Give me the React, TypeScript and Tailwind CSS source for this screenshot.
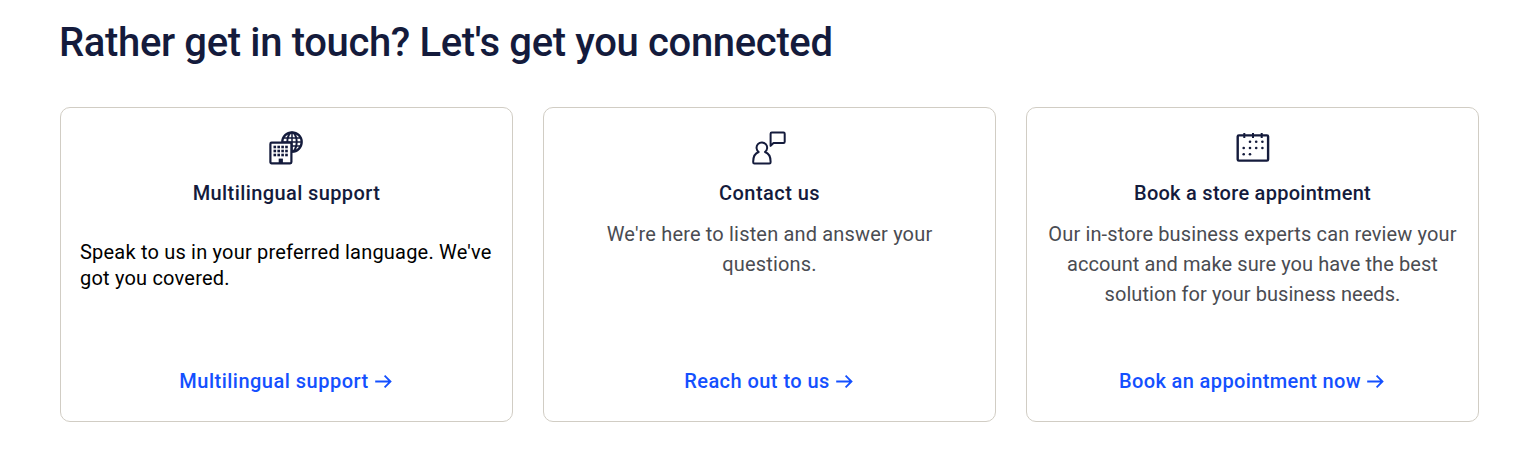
import type { ReactNode } from "react";

function SupportIcon() {
  return (
    <svg width="37" height="36" viewBox="0 0 37 36" fill="none" stroke="#141b3c" strokeWidth="2">
      <circle cx="24" cy="12" r="9.7" strokeWidth="2.3" />
      <ellipse cx="24" cy="12" rx="4.7" ry="9.5" />
      <path d="M24 2.5V21.5M15.8 8H32.2M15.8 16H32.2M14.5 12H33.5" strokeWidth="1.5" />
      <rect x="2.4" y="12.7" width="21" height="20.6" rx="1.2" fill="#fff" strokeWidth="2.2" />
      <g fill="#141b3c" stroke="none">
        {[17, 21, 25].map((y) =>
          [6.8, 10.7, 14.6, 18.5].map((x) => (
            <rect key={`${x}-${y}`} x={x - 1.3} y={y - 1.3} width="2.6" height="2.6" />
          )),
        )}
        <rect x="10.7" y="28.6" width="4.2" height="5.4" />
      </g>
    </svg>
  );
}

function ContactIcon() {
  return (
    <svg width="37" height="36" viewBox="0 0 37 36" fill="none" stroke="#141b3c" strokeWidth="2" strokeLinejoin="round">
      <path d="M7.7 22A5.3 5.3 0 1 1 14 22C17.6 23.2 19.6 26.7 19.6 31.6V32.3Q19.6 33.5 18.4 33.5H3.4Q2.2 33.5 2.2 32.3V31.6C2.2 26.7 4.1 23.2 7.7 22Z" />
      <path d="M19.6 15.9V3.7Q19.6 2.5 20.8 2.5H32.5Q33.7 2.5 33.7 3.7V11.8Q33.7 13 32.5 13H22.5Z" />
    </svg>
  );
}

function CalendarIcon() {
  return (
    <svg width="37" height="36" viewBox="0 0 37 36" fill="none" stroke="#141b3c" strokeWidth="2.4">
      <rect x="3.7" y="5.4" width="30.4" height="25.2" rx="1.2" />
      <path d="M10.3 3V8M19 3V8M27.7 3V8" strokeWidth="2" />
      <g fill="#141b3c" stroke="none">
        {[16, 22.2, 28.4].map((x) => (
          <circle key={x} cx={x} cy="11.8" r="1.3" />
        ))}
        {[9.7, 16, 22.2, 28.4].map((x) => (
          <circle key={x} cx={x} cy="18" r="1.3" />
        ))}
        {[9.7, 16].map((x) => (
          <circle key={x} cx={x} cy="24.3" r="1.3" />
        ))}
      </g>
    </svg>
  );
}

function Arrow() {
  return (
    <svg className="mr-[2px] ml-[6px]" width="17" height="14" viewBox="0 0 17 14" fill="none" stroke="#1450ff" strokeWidth="1.8">
      <path d="M0.2 7.5H15.6M9.6 1.6L15.5 7.5L9.6 13.4" />
    </svg>
  );
}

function Card({ icon, title, link, children }: { icon: ReactNode; title: ReactNode; link: ReactNode; children: ReactNode }) {
  return (
    <article className="flex h-[315px] flex-col items-center rounded-[10px] border border-[#d1cdc4] px-[19px] pt-[22px] pb-[25px]">
      {icon}
      <h3 className="mt-[12px] h-[30px] text-[20px] leading-[30px] font-medium whitespace-nowrap text-[#141b3c]">{title}</h3>
      {children}
      <a href="#" className="mt-auto flex h-[30px] items-center text-[20px] leading-[30px] font-medium whitespace-nowrap text-[#1450ff]">
        {link}
        <Arrow />
      </a>
    </article>
  );
}

export default function App() {
  return (
    <main className="h-[466px] bg-white px-[60px] pt-[18px] font-['Roboto','Liberation_Sans',sans-serif]">
      <h2 className="-ml-px h-[50px] text-[40px] leading-[50px] font-medium tracking-[-0.35px] whitespace-nowrap text-[#141b3c]">
        Rather get in touch? Let's get you connected
      </h2>
      <section className="mt-[39px] grid w-[1419px] grid-cols-3 gap-[30px]">
        <Card
          icon={<SupportIcon />}
          title={<span className="tracking-[0.4px]">Multilingual support</span>}
          link={<span className="tracking-[0.49px]">Multilingual support</span>}
        >
          <p className="mt-[31px] w-full text-[20px] leading-[26px] tracking-[0.2px] whitespace-nowrap text-black">
            Speak to us in your preferred language. We've
            <br />
            got you covered.
          </p>
        </Card>
        <Card
          icon={<ContactIcon />}
          title={<span className="tracking-[0.45px]">Contact us</span>}
          link={<span className="tracking-[0.45px]">Reach out to us</span>}
        >
          <p className="mt-[11px] text-center text-[20px] leading-[30px] tracking-[0.17px] whitespace-nowrap text-[#4a4c52]">
            We're here to listen and answer your
            <br />
            questions.
          </p>
        </Card>
        <Card
          icon={<CalendarIcon />}
          title={<span className="tracking-[0.27px]">Book a store appointment</span>}
          link={<span className="tracking-[0.38px]">Book an appointment now</span>}
        >
          <p className="mt-[11px] text-center text-[20px] leading-[30px] whitespace-nowrap text-[#4a4c52]">
            <span className="tracking-[0.13px]">Our in-store business experts can review your</span>
            <br />
            <span className="tracking-[0.08px]">account and make sure you have the best</span>
            <br />
            <span className="tracking-[0.06px]">solution for your business needs.</span>
          </p>
        </Card>
      </section>
    </main>
  );
}
